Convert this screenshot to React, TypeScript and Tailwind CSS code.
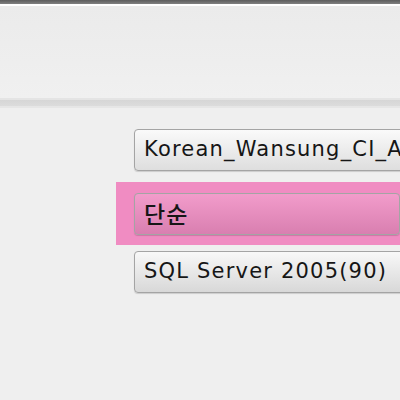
import React from 'react';

const field =
    'h-[42px] w-[300px] flex items-center pl-[9px] rounded-[4px] border border-[#a4a4a4] shadow-[0_1px_1px_rgba(0,0,0,0.15)] overflow-hidden whitespace-nowrap text-[21px] tracking-[1.2px] text-[#161616]';

function App() {
    return (
        <div className="w-[400px] h-[400px] overflow-hidden bg-[#efefef] flex flex-col font-['DejaVu_Sans',sans-serif]">
            {/* top frame */}
            <div className="h-[4px] bg-gradient-to-b from-[#5c5c5c] to-[#808080]" />
            <div className="h-[2px] bg-white" />
            <div className="h-[92px] bg-gradient-to-b from-[#ebebeb] to-[#f0f0f0]" />
            {/* separator */}
            <div className="h-[2px] bg-[#e4e4e4]" />
            <div className="h-[6px] bg-gradient-to-b from-[#d6d6d6] to-[#dcdcdc]" />
            <div className="h-[2px] bg-[#e6e6e6]" />

            <div className="flex flex-col pt-[21px]">
                <div className="pl-[134px]">
                    <div className={field + ' bg-gradient-to-b from-[#fafafa] to-[#dedede]'}>
                        Korean_Wansung_CI_AS
                    </div>
                </div>

                <div className="mt-[11px] ml-[116px] h-[63px] bg-[#f08cc2] flex items-center pl-[18px]">
                    <div
                        className={
                            field +
                            " border-[#9c5a80] bg-gradient-to-b from-[#f29ccb] to-[#d97fb0] font-['Noto_Sans_CJK_KR',sans-serif] text-[23px] font-medium tracking-[1px]"
                        }
                    >
                        단순
                    </div>
                </div>

                <div className="mt-[6px] pl-[134px]">
                    <div className={field + ' bg-gradient-to-b from-[#f8f8f8] to-[#d8d8d8]'}>
                        SQL Server 2005(90)
                    </div>
                </div>
            </div>
        </div>
    );
}

export default App;
